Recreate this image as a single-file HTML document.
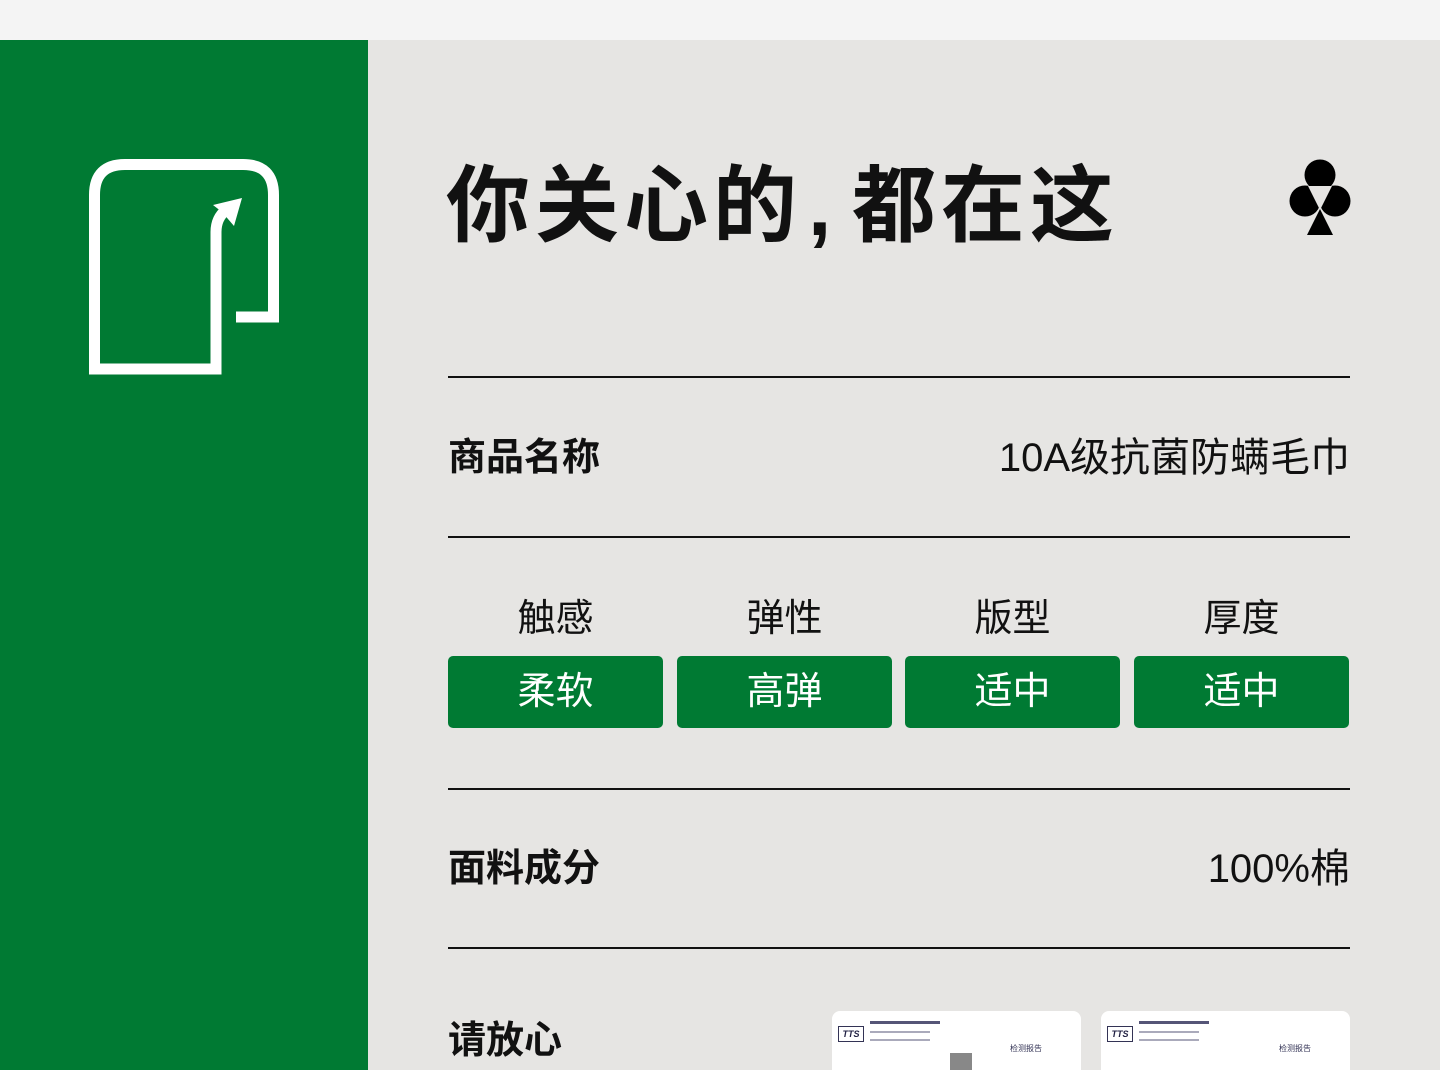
<!DOCTYPE html>
<html><head><meta charset="utf-8"><style>
*{margin:0;padding:0;box-sizing:border-box}
html,body{width:1440px;height:1070px;overflow:hidden}
body{background:#E6E5E3;position:relative;font-family:"Liberation Sans","Noto Sans CJK SC",sans-serif;color:#111}
.top{position:absolute;left:0;top:0;width:1440px;height:40px;background:#F4F4F4}
.side{position:absolute;left:0;top:40px;width:368px;height:1030px;background:#007A33}
.t{position:absolute;white-space:nowrap}
.line{position:absolute;left:448px;width:902px;height:2px;background:#111}
.box{position:absolute;top:656px;width:215px;height:72px;background:#007A33;border-radius:5px;color:#fff;font-size:38px;text-align:center;line-height:72px}
.lab{position:absolute;top:596px;width:215px;text-align:center;font-size:38px;line-height:46px}
.card{position:absolute;top:1011px;width:249px;height:59px;background:#fff;border-radius:8px 8px 0 0;overflow:hidden}
</style></head><body>
<div class="top"></div>
<div class="side"></div>
<svg style="position:absolute;left:0;top:0" width="368" height="420">
<path d="M236,317 L273.5,317 L273.5,195 Q273.5,164.5 243,164.5 L125,164.5 Q94.5,164.5 94.5,195 L94.5,369 L216,369 L216,232 Q216,218 226,210" fill="none" stroke="#fff" stroke-width="11" stroke-linejoin="miter"/>
<polygon points="242,198 213,205 222,212 234,226" fill="#fff"/>
</svg>
<div class="t" style="left:446px;top:156px;font-size:84px;font-weight:bold;line-height:100px;letter-spacing:5px">你关心的<span style="display:inline-block;width:50px;overflow:hidden;vertical-align:top;text-indent:6px">,</span>都在这</div>
<svg style="position:absolute;left:1285px;top:155px" width="70" height="85">
<circle cx="35" cy="20" r="15.5"/><circle cx="20" cy="46" r="15.5"/><circle cx="50" cy="46" r="15.5"/>
<polygon points="23,31 47,31 35,55" fill="#E6E5E3"/>
<polygon points="35,54 22,80 48,80"/>
</svg>
<div class="line" style="top:376px"></div>
<div class="t" style="left:448px;top:434px;font-size:38px;font-weight:bold;line-height:48px">商品名称</div>
<div class="t" style="right:90px;top:434px;font-size:40px;line-height:48px">10A级抗菌防螨毛巾</div>
<div class="line" style="top:536px"></div>
<div class="lab" style="left:448px">触感</div>
<div class="lab" style="left:677px">弹性</div>
<div class="lab" style="left:905px">版型</div>
<div class="lab" style="left:1134px">厚度</div>
<div class="box" style="left:448px">柔软</div>
<div class="box" style="left:677px">高弹</div>
<div class="box" style="left:905px">适中</div>
<div class="box" style="left:1134px">适中</div>
<div class="line" style="top:788px"></div>
<div class="t" style="left:448px;top:845px;font-size:38px;font-weight:bold;line-height:48px">面料成分</div>
<div class="t" style="right:90px;top:845px;font-size:40px;line-height:48px">100%棉</div>
<div class="line" style="top:947px"></div>
<div class="t" style="left:448px;top:1017px;font-size:38px;font-weight:bold;line-height:48px">请放心</div>
<div class="card" style="left:832px">
<div style="position:absolute;left:6px;top:15px;width:26px;height:16px;border:1px solid #335;color:#224;font-size:9px;font-style:italic;font-weight:bold;text-align:center;line-height:14px">TTS</div>
<div style="position:absolute;left:38px;top:10px;width:70px;height:3px;background:#557"></div>
<div style="position:absolute;left:38px;top:20px;width:60px;height:2px;background:#aab"></div>
<div style="position:absolute;left:38px;top:28px;width:60px;height:2px;background:#aab"></div>
<div style="position:absolute;left:178px;top:32px;font-size:8px;color:#335">检测报告</div>
<div style="position:absolute;left:118px;top:42px;width:22px;height:20px;background:#888"></div>
</div>
<div class="card" style="left:1101px">
<div style="position:absolute;left:6px;top:15px;width:26px;height:16px;border:1px solid #335;color:#224;font-size:9px;font-style:italic;font-weight:bold;text-align:center;line-height:14px">TTS</div>
<div style="position:absolute;left:38px;top:10px;width:70px;height:3px;background:#557"></div>
<div style="position:absolute;left:38px;top:20px;width:60px;height:2px;background:#aab"></div>
<div style="position:absolute;left:38px;top:28px;width:60px;height:2px;background:#aab"></div>
<div style="position:absolute;left:178px;top:32px;font-size:8px;color:#335">检测报告</div>
</div>
</body></html>
